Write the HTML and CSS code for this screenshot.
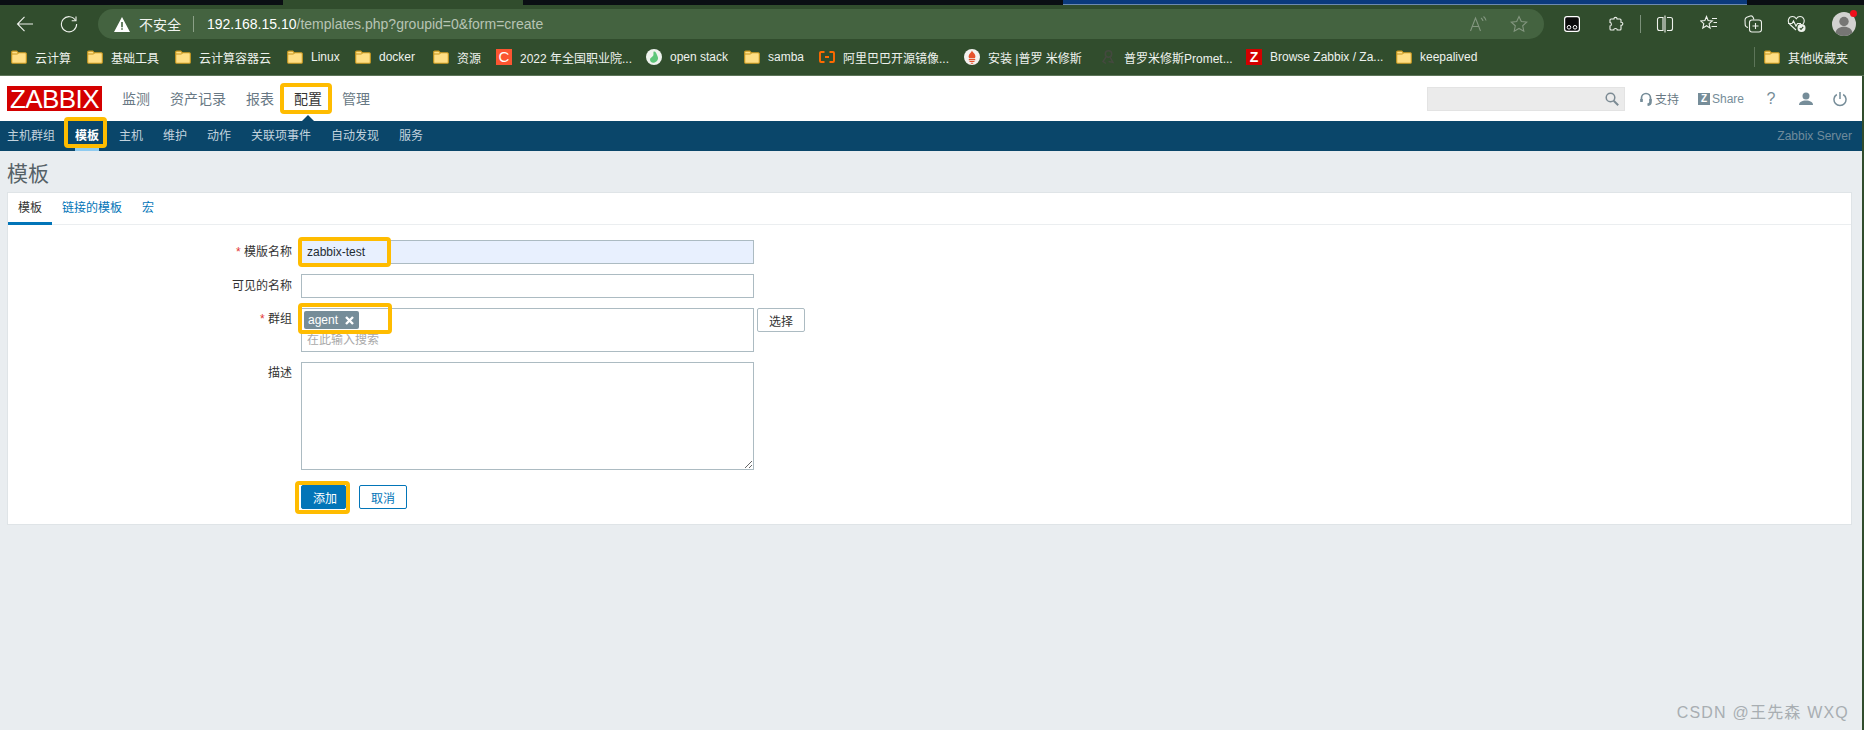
FILE: index.html
```html
<!DOCTYPE html>
<html lang="zh-CN">
<head>
<meta charset="utf-8">
<title>模板</title>
<link rel="stylesheet" href="styles.css">
</head>
<body>
<svg class="sprite" aria-hidden="true">
  <symbol id="folder" viewBox="0 0 16 16">
    <path d="M.7 3.2c0-.7.4-1.1 1-1.1h4l1.6 1.7h7c.6 0 1 .4 1 1v8.400c0 .7-.4 1.100-1 1.100H1.700c-.6 0-1-.4-1-1.100z" fill="#ffdf85" stroke="#c9981f" stroke-width="1.100"/>
    <path d="M1 5h5.600l.9-1.200" fill="none" stroke="#c9981f" stroke-width="1"/>
  </symbol>
</svg>

<div class="strip">
  <i class="seg seg-dark seg-a"></i><i class="seg seg-green"></i><i class="seg seg-dark seg-b"></i><i class="seg seg-blue"></i><i class="seg seg-dark"></i>
</div>

<div class="toolbar">
  <span class="tool">
    <svg width="18" height="18" viewBox="0 0 18 18" fill="none" stroke="#eef2ec" stroke-width="1.100"><path d="M17 9H1.500M8.500 1.800 1.500 9l7 7.200"/></svg>
  </span>
  <span class="tool">
    <svg width="18" height="18" viewBox="0 0 18 18" fill="none" stroke="#eef2ec" stroke-width="1.100"><path d="M15.600 5.500A7.600 7.600 0 1 0 16.600 9"/><path d="M16 1.500v4.300h-4.300"/></svg>
  </span>
  <div class="address">
    <svg class="warn" width="16" height="15" viewBox="0 0 16 15"><path d="M8 0 16 15H0z" fill="#fff"/><path d="M7.200 5h1.600v5.200H7.200zM7.200 11.200h1.600v1.600H7.200z" fill="#446340"/></svg>
    <span class="insecure">不安全</span>
    <i class="addr-sep"></i>
    <span class="url"><b class="host">192.168.15.10</b>/templates.php?groupid=0&amp;form=create</span>
    <span class="addr-right">
      <svg width="18" height="18" viewBox="0 0 18 18" fill="none" stroke="#83967f" stroke-width="1.100"><path d="M1.500 16 6.500 3l5 13M3.200 11.500h6.600M12 3c1.200.8 1.800 1.800 2 3M14.500 1.500c1.400 1.100 2.200 2.500 2.500 4"/></svg>
      <svg width="18" height="18" viewBox="0 0 18 18" fill="none" stroke="#83967f" stroke-width="1.100"><path d="m9 1.500 2.300 5 5.400.6-4 3.700 1.100 5.400L9 13.500l-4.800 2.700 1.100-5.400-4-3.700 5.400-.6z"/></svg>
    </span>
  </div>
  <div class="tools-right">
    <span class="tool">
      <svg width="16" height="16" viewBox="0 0 16 16"><rect x=".6" y=".6" width="14.800" height="14.800" rx="2.400" fill="#0b0b0b" stroke="#fff" stroke-width="1.200"/><circle cx="5" cy="11.300" r="1.800" fill="none" stroke="#fff"/><circle cx="11" cy="11.300" r="1.800" fill="none" stroke="#fff"/></svg>
    </span>
    <span class="tool">
      <svg width="16" height="16" viewBox="0 0 16 16" fill="none" stroke="#eef2ec" stroke-width="1.100"><path d="M6 3C5.800 .8 9.200 .8 9 3h3a1 1 0 0 1 1 1v2.300c2.400-.3 2.400 3.300 0 3V13a1 1 0 0 1-1 1H9.200c.3-2-3.700-2-3.400 0H3a1 1 0 0 1-1-1v-3c1.800 0 1.800-3.500 0-3.500V4a1 1 0 0 1 1-1z"/></svg>
    </span>
    <i class="tool-sep"></i>
    <span class="tool">
      <svg width="18" height="18" viewBox="0 0 18 18" fill="none" stroke="#eef2ec" stroke-width="1.100"><path d="M7 2.500H3.500a2 2 0 0 0-2 2v9a2 2 0 0 0 2 2H7zM11 2.500h3.500a2 2 0 0 1 2 2v9a2 2 0 0 1-2 2H11M9 .5v17"/></svg>
    </span>
    <span class="tool">
      <svg width="18" height="18" viewBox="0 0 18 18" fill="none" stroke="#eef2ec" stroke-width="1.100"><path d="m6.500 1.500 1.600 4 4.200.4-3.200 2.800 1 4.300-3.600-2.300-3.700 2.300 1-4.300L.6 5.900l4.300-.4zM12 3.500h5M13.500 7.500H17M11.500 11.500H17"/></svg>
    </span>
    <span class="tool">
      <svg width="18" height="18" viewBox="0 0 18 18" fill="none" stroke="#eef2ec" stroke-width="1.100"><path d="M4 12.500c-1.500-.3-2.700-1.200-2.800-2.700L1 5c0-1.300.6-2.300 1.800-2.800L6.200 1c1.300-.4 2.500.3 3 1.500l.7 2"/><rect x="5.500" y="5" width="12" height="12" rx="2.500"/><path d="M11.500 8v6M8.500 11h6"/></svg>
    </span>
    <span class="tool">
      <svg width="20" height="18" viewBox="0 0 20 18" fill="none" stroke="#eef2ec" stroke-width="1.100"><path d="M9 15 3 9.500C-.2 6.500 1.500 1.500 5.500 1.500c1.800 0 3 1 3.800 2.200C10 2.500 11.300 1.500 13 1.500c3.800 0 5.500 4.500 3 7.500"/><path d="M1 8.500h4l1.500-2.500L9 11l1.500-2.500H14"/><circle cx="14.500" cy="13" r="4" fill="#eef2ec" stroke="none"/><path d="m12.800 13.200 1.200 1.200 2.200-2.600" stroke="#314d2d"/></svg>
    </span>
    <span class="avatar-wrap">
      <svg width="24" height="24" viewBox="0 0 24 24"><circle cx="12" cy="12" r="12" fill="#d2d2d0"/><circle cx="12" cy="9.500" r="4.700" fill="#767674"/><path d="M3.500 20.500c1-4.500 5-5.800 8.500-5.800s7.500 1.300 8.500 5.800A12 12 0 0 1 12 24a12 12 0 0 1-8.500-3.500z" fill="#767674"/></svg>
      <i class="red-dot"></i>
    </span>
  </div>
</div>

<div class="bookmarks">
  <a class="bm bm-1"><svg class="bm-ico"><use href="#folder"/></svg>云计算</a>
  <a class="bm bm-2"><svg class="bm-ico"><use href="#folder"/></svg>基础工具</a>
  <a class="bm bm-3"><svg class="bm-ico"><use href="#folder"/></svg>云计算容器云</a>
  <a class="bm bm-4"><svg class="bm-ico"><use href="#folder"/></svg>Linux</a>
  <a class="bm bm-5"><svg class="bm-ico"><use href="#folder"/></svg>docker</a>
  <a class="bm bm-6"><svg class="bm-ico"><use href="#folder"/></svg>资源</a>
  <a class="bm bm-7"><span class="fav fav-c">C</span>2022 年全国职业院...</a>
  <a class="bm bm-8"><svg class="bm-ico" viewBox="0 0 16 16"><circle cx="8" cy="8" r="8" fill="#eef3ee"/><path d="M8 2.500c2 0 2.300 2 3 3.500s1.500 3 .7 4.800c-.8 1.800-2.500 3-4.500 2.900-2-.1-3.200-1.500-3.200-3 0-2.200 2.500-2.500 3.300-4.200C7.800 5 7 2.500 8 2.500z" fill="#5cc679"/></svg>open stack</a>
  <a class="bm bm-9"><svg class="bm-ico"><use href="#folder"/></svg>samba</a>
  <a class="bm bm-10"><svg class="bm-ico" viewBox="0 0 16 16" fill="none" stroke="#ff6a00" stroke-width="1.900"><path d="M5.500 3H2a1 1 0 0 0-1 1v8a1 1 0 0 0 1 1h3.500M10.500 3H14a1 1 0 0 1 1 1v8a1 1 0 0 1-1 1h-3.500M6 8h4"/></svg>阿里巴巴开源镜像...</a>
  <a class="bm bm-11"><svg class="bm-ico" viewBox="0 0 16 16"><circle cx="8" cy="8" r="8" fill="#f5f2f0"/><path d="M8 1.500c.4 1.800 3.400 3 3.400 6 0 .9-.3 1.400-.6 1.800H5.200c-.3-.5-.6-1-.6-1.800C4.600 5 7.500 3.500 8 1.500zM4.800 10.100h6.400v1.100H4.800zM5.500 12h5v1.100h-5zM6.800 13.800h2.400v.9H6.800z" fill="#e6522c"/></svg>安装 |普罗 米修斯</a>
  <a class="bm bm-12"><svg class="bm-ico" viewBox="0 0 16 16" fill="none" stroke="#44493f" stroke-width="1.500"><circle cx="8.500" cy="5" r="3.200"/><path d="M6 8 3 12.500l3 2M10 8l3 5.500-4.500-1"/></svg>普罗米修斯Promet...</a>
  <a class="bm bm-13"><span class="fav fav-z">Z</span>Browse Zabbix / Za...</a>
  <a class="bm bm-14"><svg class="bm-ico"><use href="#folder"/></svg>keepalived</a>
  <i class="bm-sep"></i>
  <a class="bm bm-other"><svg class="bm-ico"><use href="#folder"/></svg>其他收藏夹</a>
</div>

<div class="main">
  <header class="topbar">
    <div class="logo">ZABBIX</div>
    <nav class="nav">
      <a>监测</a><a>资产记录</a><a>报表</a>
      <a class="nav-active">配置<i class="hl hl-nav"></i><i class="caret"></i></a>
      <a>管理</a>
    </nav>
    <div class="search">
      <svg width="14" height="14" viewBox="0 0 14 14" fill="none" stroke="#7b8a93" stroke-width="1.500"><circle cx="5.500" cy="5.500" r="4.300"/><path d="m8.700 8.700 4.500 4.500" stroke-width="2"/></svg>
    </div>
    <a class="meta meta-support">
      <svg width="12" height="14" viewBox="0 0 12 14" fill="none" stroke="#768d99" stroke-width="1.700"><path d="M1.500 9V6a4.500 4.500 0 0 1 9 0v3"/><path d="M1.500 7v3M10.500 7v3c0 1.500-1 2.500-3 2.800" stroke-width="2.600"/></svg>
      支持
    </a>
    <a class="meta meta-share"><span class="z-box">Z</span>Share</a>
    <a class="meta-icon meta-help">?</a>
    <a class="meta-icon meta-user">
      <svg width="14" height="14" viewBox="0 0 14 14" fill="#768d99"><circle cx="7" cy="4" r="3.500"/><path d="M0 13c0-3 3-4.500 7-4.500s7 1.500 7 4.500z"/></svg>
    </a>
    <a class="meta-icon meta-power">
      <svg width="14" height="16" viewBox="0 0 14 16" fill="none" stroke="#768d99" stroke-width="1.500"><path d="M7 1v7M3.800 3.500a6 6 0 1 0 6.400 0"/></svg>
    </a>
  </header>

  <nav class="subnav">
    <a>主机群组</a>
    <a class="sub-active">模板<i class="hl hl-sub"></i><i class="sub-mark"></i></a>
    <a>主机</a><a>维护</a><a>动作</a><a>关联项事件</a><a>自动发现</a><a>服务</a>
    <span class="server">Zabbix Server</span>
  </nav>

  <h1 class="title">模板</h1>

  <section class="card">
    <div class="tabs">
      <a class="tab tab-active">模板</a>
      <a class="tab">链接的模板</a>
      <a class="tab">宏</a>
    </div>
    <form class="form">
      <div class="row">
        <label class="label"><span class="req">*</span> 模版名称</label>
        <div class="field">
          <input class="input input-filled" type="text" value="zabbix-test">
          <i class="hl hl-name"></i>
        </div>
      </div>
      <div class="row">
        <label class="label">可见的名称</label>
        <div class="field"><input class="input" type="text"></div>
      </div>
      <div class="row">
        <label class="label label-group"><span class="req">*</span> 群组</label>
        <div class="field">
          <div class="multi">
            <span class="tag">agent
              <svg width="9" height="9" viewBox="0 0 9 9" stroke="#fff" stroke-width="2.400"><path d="m1 1 7 7M8 1 1 8"/></svg>
            </span>
            <input class="multi-input" type="text" placeholder="在此输入搜索">
          </div>
          <i class="hl hl-group"></i>
        </div>
        <button class="btn-select" type="button">选择</button>
      </div>
      <div class="row">
        <label class="label label-desc">描述</label>
        <div class="field"><textarea class="textarea"></textarea></div>
      </div>
      <div class="actions">
        <span class="add-wrap">
          <button class="btn-add" type="button">添加</button>
          <i class="hl hl-add"></i>
        </span>
        <button class="btn-cancel" type="button">取消</button>
      </div>
    </form>
  </section>

  <div class="watermark">CSDN @王先森 WXQ</div>
</div>
</body>
</html>
```

FILE: styles.css
```css
* { box-sizing: border-box; }
html, body { margin: 0; height: 100%; }
body {
  height: 730px;
  overflow: hidden;
  display: flex;
  flex-direction: column;
  background: #314d2d;
  font-family: "Liberation Sans", "Noto Sans CJK SC", sans-serif;
  font-size: 12px;
}
.sprite { display: none; }
i { font-style: normal; display: block; }

/* browser chrome */
.strip { display: flex; height: 5px; background: #0a0e13; }
.seg { height: 5px; }
.seg-dark { flex: 1; background: #0a0e13; }
.seg-a { flex: 0 0 283px; }
.seg-green { flex: 0 0 240px; background: #314d2d; }
.seg-b { flex: 0 0 540px; }
.seg-blue { flex: 0 0 684px; background: #0b3a7c; border-bottom: 1px solid #6c8ab0; }

.toolbar { display: flex; height: 34px; padding: 4px 0 0 3px; background: #314d2d; }
.tool { display: flex; width: 44px; height: 30px; align-items: center; justify-content: center; flex: none; }
.address {
  flex: 1;
  margin-left: 7px;
  padding-left: 16px;
  display: flex;
  align-items: center;
  height: 30px;
  border-radius: 15px;
  background: #446340;
  color: #fff;
}
.warn { flex: none; }
.insecure { margin-left: 9px; font-size: 14px; color: #f1f4f0; }
.addr-sep { width: 1px; height: 16px; margin: 0 13px 0 12px; background: #8ba087; }
.url { font-size: 14px; color: #b7c4b4; }
.host { font-weight: 400; color: #fff; }
.addr-right { display: flex; gap: 23px; margin-left: auto; padding-right: 16px; }
.tools-right { display: flex; align-items: center; margin-left: 6px; height: 30px; }
.tool-sep { width: 1px; height: 18px; margin: 0 2px; background: #7c917a; }
.avatar-wrap { position: relative; width: 24px; height: 24px; margin: 0 8px 0 13px; }
.avatar-wrap svg { display: block; }
.red-dot { position: absolute; right: -1px; top: -2px; width: 7px; height: 7px; border-radius: 50%; background: #f0101c; }

.bookmarks {
  display: flex;
  align-items: center;
  height: 37px;
  padding: 0 0 0 11px;
  background: #314d2d;
  border-bottom: 1px solid #5d7559;
  color: #eef2ed;
}
.bm { display: flex; align-items: center; gap: 8px; flex: none; white-space: nowrap; }
.bm-ico { width: 16px; height: 16px; flex: none; }
.fav { display: block; width: 16px; height: 16px; flex: none; text-align: center; color: #fff; }
.fav-c { background: #fc5531; font-size: 15px; line-height: 16px; }
.fav-z { background: #d40000; font-size: 14px; line-height: 16px; font-weight: 700; }
.bm-1 { width: 76px; }
.bm-2 { width: 88px; }
.bm-3 { width: 112px; }
.bm-4 { width: 68px; }
.bm-5 { width: 78px; }
.bm-6 { width: 63px; }
.bm-7 { width: 150px; }
.bm-8 { width: 98px; }
.bm-9 { width: 75px; }
.bm-10 { width: 145px; }
.bm-11 { width: 136px; }
.bm-12 { width: 146px; }
.bm-13 { width: 150px; }
.bm-14 { width: 100px; }
.bm-sep { width: 1px; height: 20px; margin-left: auto; background: #5d7559; }
.bm-other { margin: 0 16px 0 9px; }

/* page */
.main { position: relative; flex: 1; margin-right: 2px; background: #e9edf0; }
.hl {
  position: absolute;
  border: 4px solid #ffbc00;
  border-radius: 4px;
  pointer-events: none;
}

.topbar { display: flex; align-items: center; height: 45px; padding-right: 12px; background: #fff; }
.logo {
  width: 95px;
  height: 25px;
  margin-left: 7px;
  background: #d40000;
  color: #fff;
  font-size: 26px;
  line-height: 26px;
  letter-spacing: -.6px;
  text-align: center;
}
.nav { display: flex; gap: 20px; margin-left: 20px; font-size: 14px; line-height: 20px; color: #687884; }
.nav-active { position: relative; color: #333; }
.hl-nav { left: -14px; top: -6px; width: 52px; height: 31px; }
.caret {
  position: absolute;
  left: 7px;
  top: 26px;
  border: 7px solid transparent;
  border-top: 0;
  border-bottom-color: #0a466a;
}
.search {
  display: flex;
  align-items: center;
  justify-content: flex-end;
  width: 198px;
  height: 24px;
  margin-left: auto;
  padding-right: 5px;
  background: #ebebeb;
  border: 1px solid #e3e3e3;
}
.meta { display: flex; align-items: center; color: #768d99; }
.meta-support { gap: 3px; margin-left: 15px; color: #687884; }
.meta-share { gap: 2px; margin-left: 19px; }
.z-box {
  width: 12px;
  height: 12px;
  background: #768d99;
  color: #fff;
  font-size: 10px;
  font-weight: 700;
  line-height: 12px;
  text-align: center;
}
.meta-icon { display: flex; width: 20px; justify-content: center; color: #768d99; }
.meta-help { margin-left: 17px; font-size: 16px; }
.meta-user { margin-left: 15px; }
.meta-power { margin-left: 14px; }

.subnav { display: flex; align-items: center; gap: 20px; height: 30px; padding: 0 10px 0 7px; background: #0a466a; line-height: 18px; color: #c3d3de; }
.sub-active { position: relative; color: #fff; font-weight: 700; }
.hl-sub { left: -11px; top: -10px; width: 43px; height: 31px; }
.sub-mark { position: absolute; left: 0; right: 0; top: 21px; height: 3px; background: #8fcbf0; }
.server { margin-left: auto; color: #6f8b9c; }

.title { margin: 0; height: 42px; padding-left: 7px; font-size: 21px; font-weight: 400; line-height: 46px; color: #566167; }

.card { width: 1843px; margin-left: 8px; background: #fff; box-shadow: 0 0 0 1px #dfe4e7; }
.tabs { display: flex; height: 32px; border-bottom: 1px solid #ebeef0; }
.tab { display: block; height: 32px; padding: 0 10px; line-height: 31px; color: #0275b8; }
.tab-active { color: #333; border-bottom: 3px solid #0275b8; }
.form { padding: 15px 0; }
.row { display: flex; margin-bottom: 10px; }
.label { width: 284px; margin-right: 9px; line-height: 24px; text-align: right; color: #333; }
.label-group { line-height: 22px; }
.label-desc { line-height: 22px; }
.req { color: #e33734; }
.field { position: relative; width: 453px; }
.input {
  display: block;
  width: 100%;
  height: 24px;
  padding: 0 5px;
  background: #fff;
  border: 1px solid #acbbc2;
  font: inherit;
  color: #1f2c33;
  outline: 0;
}
.input-filled { background: #e8f0fe; }
.hl-name { left: -3px; top: -3px; width: 93px; height: 30px; }
.hl-group { left: -3px; top: -5px; width: 94px; height: 31px; }
.multi { height: 44px; padding: 2px 2px 0; border: 1px solid #acbbc2; background: #fff; }
.tag {
  display: flex;
  align-items: center;
  justify-content: space-between;
  width: 55px;
  height: 18px;
  padding: 0 5px 0 4px;
  border-radius: 2px;
  background: #768d99;
  color: #fff;
}
.multi-input { display: block; width: 100%; height: 22px; padding: 0 3px; border: 0; background: none; font: inherit; outline: 0; }
.multi-input::placeholder { color: #a9a9a9; opacity: 1; }
.btn-select {
  width: 48px;
  height: 24px;
  margin-left: 3px;
  padding: 0;
  background: #fff;
  border: 1px solid #acbbc2;
  border-radius: 2px;
  font: inherit;
  color: #333;
}
.textarea { display: block; width: 100%; height: 108px; border: 1px solid #acbbc2; background: #fff; outline: 0; }
.actions { display: flex; gap: 13px; margin: 15px 0 0 293px; }
.add-wrap { position: relative; display: block; }
.btn-add {
  display: block;
  width: 45px;
  height: 24px;
  padding: 0 0 0 3px;
  background: #0275b8;
  border: 1px solid #0275b8;
  border-radius: 2px;
  font: inherit;
  color: #fff;
}
.hl-add { left: -6px; top: -4px; width: 55px; height: 33px; }
.btn-cancel {
  width: 48px;
  height: 24px;
  padding: 0;
  background: #fff;
  border: 1px solid #0275b8;
  border-radius: 2px;
  font: inherit;
  color: #0275b8;
}
.watermark {
  position: absolute;
  right: 13px;
  top: 623px;
  font-size: 16px;
  letter-spacing: 1.200px;
  color: #a8aeb2;
  white-space: nowrap;
}
```
